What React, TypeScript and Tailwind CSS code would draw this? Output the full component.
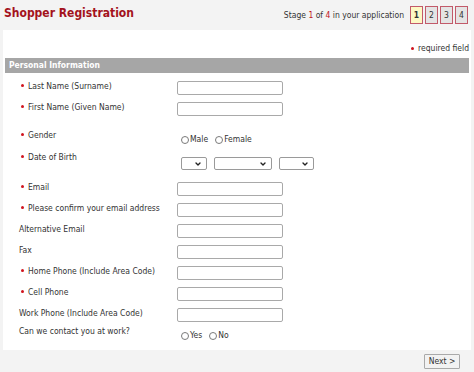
import { ChevronDown } from "lucide-react";

const font = { fontFamily: '"DejaVu Sans Condensed", "DejaVu Sans", Verdana, sans-serif' };

function Bullet() {
  return <span className="inline-block w-[3px] h-[3px] rounded-full bg-[#d0141e] mr-[4px] ml-[2px] align-middle relative -top-[1px]"></span>;
}

function Label({ text, required }: { text: string; required?: boolean }) {
  return (
    <div className="w-[158px] shrink-0 text-[8.5px] leading-[11px] text-[#333]">
      {required && <Bullet />}
      {text}
    </div>
  );
}

function TextInput() {
  return <div className="w-[106px] h-[14px] border border-[#a9a9a9] rounded-[2px] bg-white"></div>;
}

function Radio({ label }: { label: string }) {
  return (
    <div className="flex items-center">
      <span className="w-[8px] h-[8px] rounded-full border border-[#7a7a7a] bg-white mr-[1px]"></span>
      <span className="text-[8.5px] leading-[11px] text-[#333]">{label}</span>
    </div>
  );
}

function Select({ width }: { width: string }) {
  return (
    <div className={`${width} h-[13px] border border-[#9a9a9a] rounded-[2px] bg-white flex items-center justify-end pr-[4px]`}>
      <ChevronDown size={8} strokeWidth={4} color="#222" />
    </div>
  );
}

function InputRow({ text, required }: { text: string; required?: boolean }) {
  return (
    <div className="flex items-start h-[21px]">
      <Label text={text} required={required} />
      <TextInput />
    </div>
  );
}

export default function App() {
  return (
    <div className="w-[474px] h-[372px] bg-[#f3f3f3] overflow-hidden flex flex-col" style={font}>
      <div className="h-[30px] flex items-center justify-between pl-[4px] pr-[6px] shrink-0">
        <h1 className="text-[12px] font-bold text-[#a3121c] -mt-[5px]">Shopper Registration</h1>
        <div className="flex items-center">
          <span className="text-[8.5px] text-[#333] mr-[6px]">
            Stage <b className="text-[#c0141e] font-normal">1</b> of <b className="text-[#c0141e] font-normal">4</b> in your application
          </span>
          <div className="flex gap-[2px]">
            <span className="w-[13px] h-[18px] border border-[#c25a6a] bg-[#fdf8c4] text-[8.5px] font-bold text-[#333] flex items-center justify-center">1</span>
            <span className="w-[13px] h-[18px] border border-[#c25a6a] bg-[#e4e4e4] text-[8.5px] text-[#333] flex items-center justify-center">2</span>
            <span className="w-[13px] h-[18px] border border-[#c25a6a] bg-[#e4e4e4] text-[8.5px] text-[#333] flex items-center justify-center">3</span>
            <span className="w-[13px] h-[18px] border border-[#c25a6a] bg-[#e4e4e4] text-[8.5px] text-[#333] flex items-center justify-center">4</span>
          </div>
        </div>
      </div>

      <div className="mx-[3px] bg-white h-[320px] shrink-0 flex flex-col">
        <div className="h-[28px] flex items-center justify-end pt-[8px] pr-[2px] text-[8.5px] leading-[11px] text-[#333]">
          <span className="inline-block w-[3px] h-[3px] rounded-full bg-[#d0141e] mr-[4px]"></span>
          required field
        </div>
        <div className="mx-[2px] h-[15px] bg-[#a6a6a6] text-white font-bold text-[8.5px] flex items-center pl-[4px]">
          Personal Information
        </div>

        <div className="pl-[16px] pt-[8px] flex flex-col">
          <InputRow text="Last Name (Surname)" required />
          <div className="flex items-start h-[27px]">
            <Label text="First Name (Given Name)" required />
            <TextInput />
          </div>
          <div className="flex items-start h-[23px] pt-[1px]">
            <Label text="Gender" required />
            <div className="flex gap-[7px] ml-[4px] mt-[4px]">
              <Radio label="Male" />
              <Radio label="Female" />
            </div>
          </div>
          <div className="flex items-start h-[30px]">
            <Label text="Date of Birth" required />
            <div className="flex gap-[7px] ml-[4px] mt-[5px]">
              <Select width="w-[26px]" />
              <Select width="w-[58px]" />
              <Select width="w-[35px]" />
            </div>
          </div>
          <InputRow text="Email" required />
          <InputRow text="Please confirm your email address" required />
          <InputRow text="Alternative Email" />
          <InputRow text="Fax" />
          <InputRow text="Home Phone (Include Area Code)" required />
          <InputRow text="Cell Phone" required />
          <InputRow text="Work Phone (Include Area Code)" />
          <div className="flex items-start h-[21px] -mt-[3px]">
            <Label text="Can we contact you at work?" />
            <div className="flex gap-[7px] ml-[4px] mt-[4px]">
              <Radio label="Yes" />
              <Radio label="No" />
            </div>
          </div>
        </div>
      </div>

      <div className="h-[22px] flex items-center justify-end pr-[14px] shrink-0">
        <div className="w-[36px] h-[15px] border border-[#a9a9a9] bg-[#f2f2f2] rounded-[1px] text-[8.5px] text-[#333] flex items-center justify-center">
          Next &gt;
        </div>
      </div>
    </div>
  );
}
